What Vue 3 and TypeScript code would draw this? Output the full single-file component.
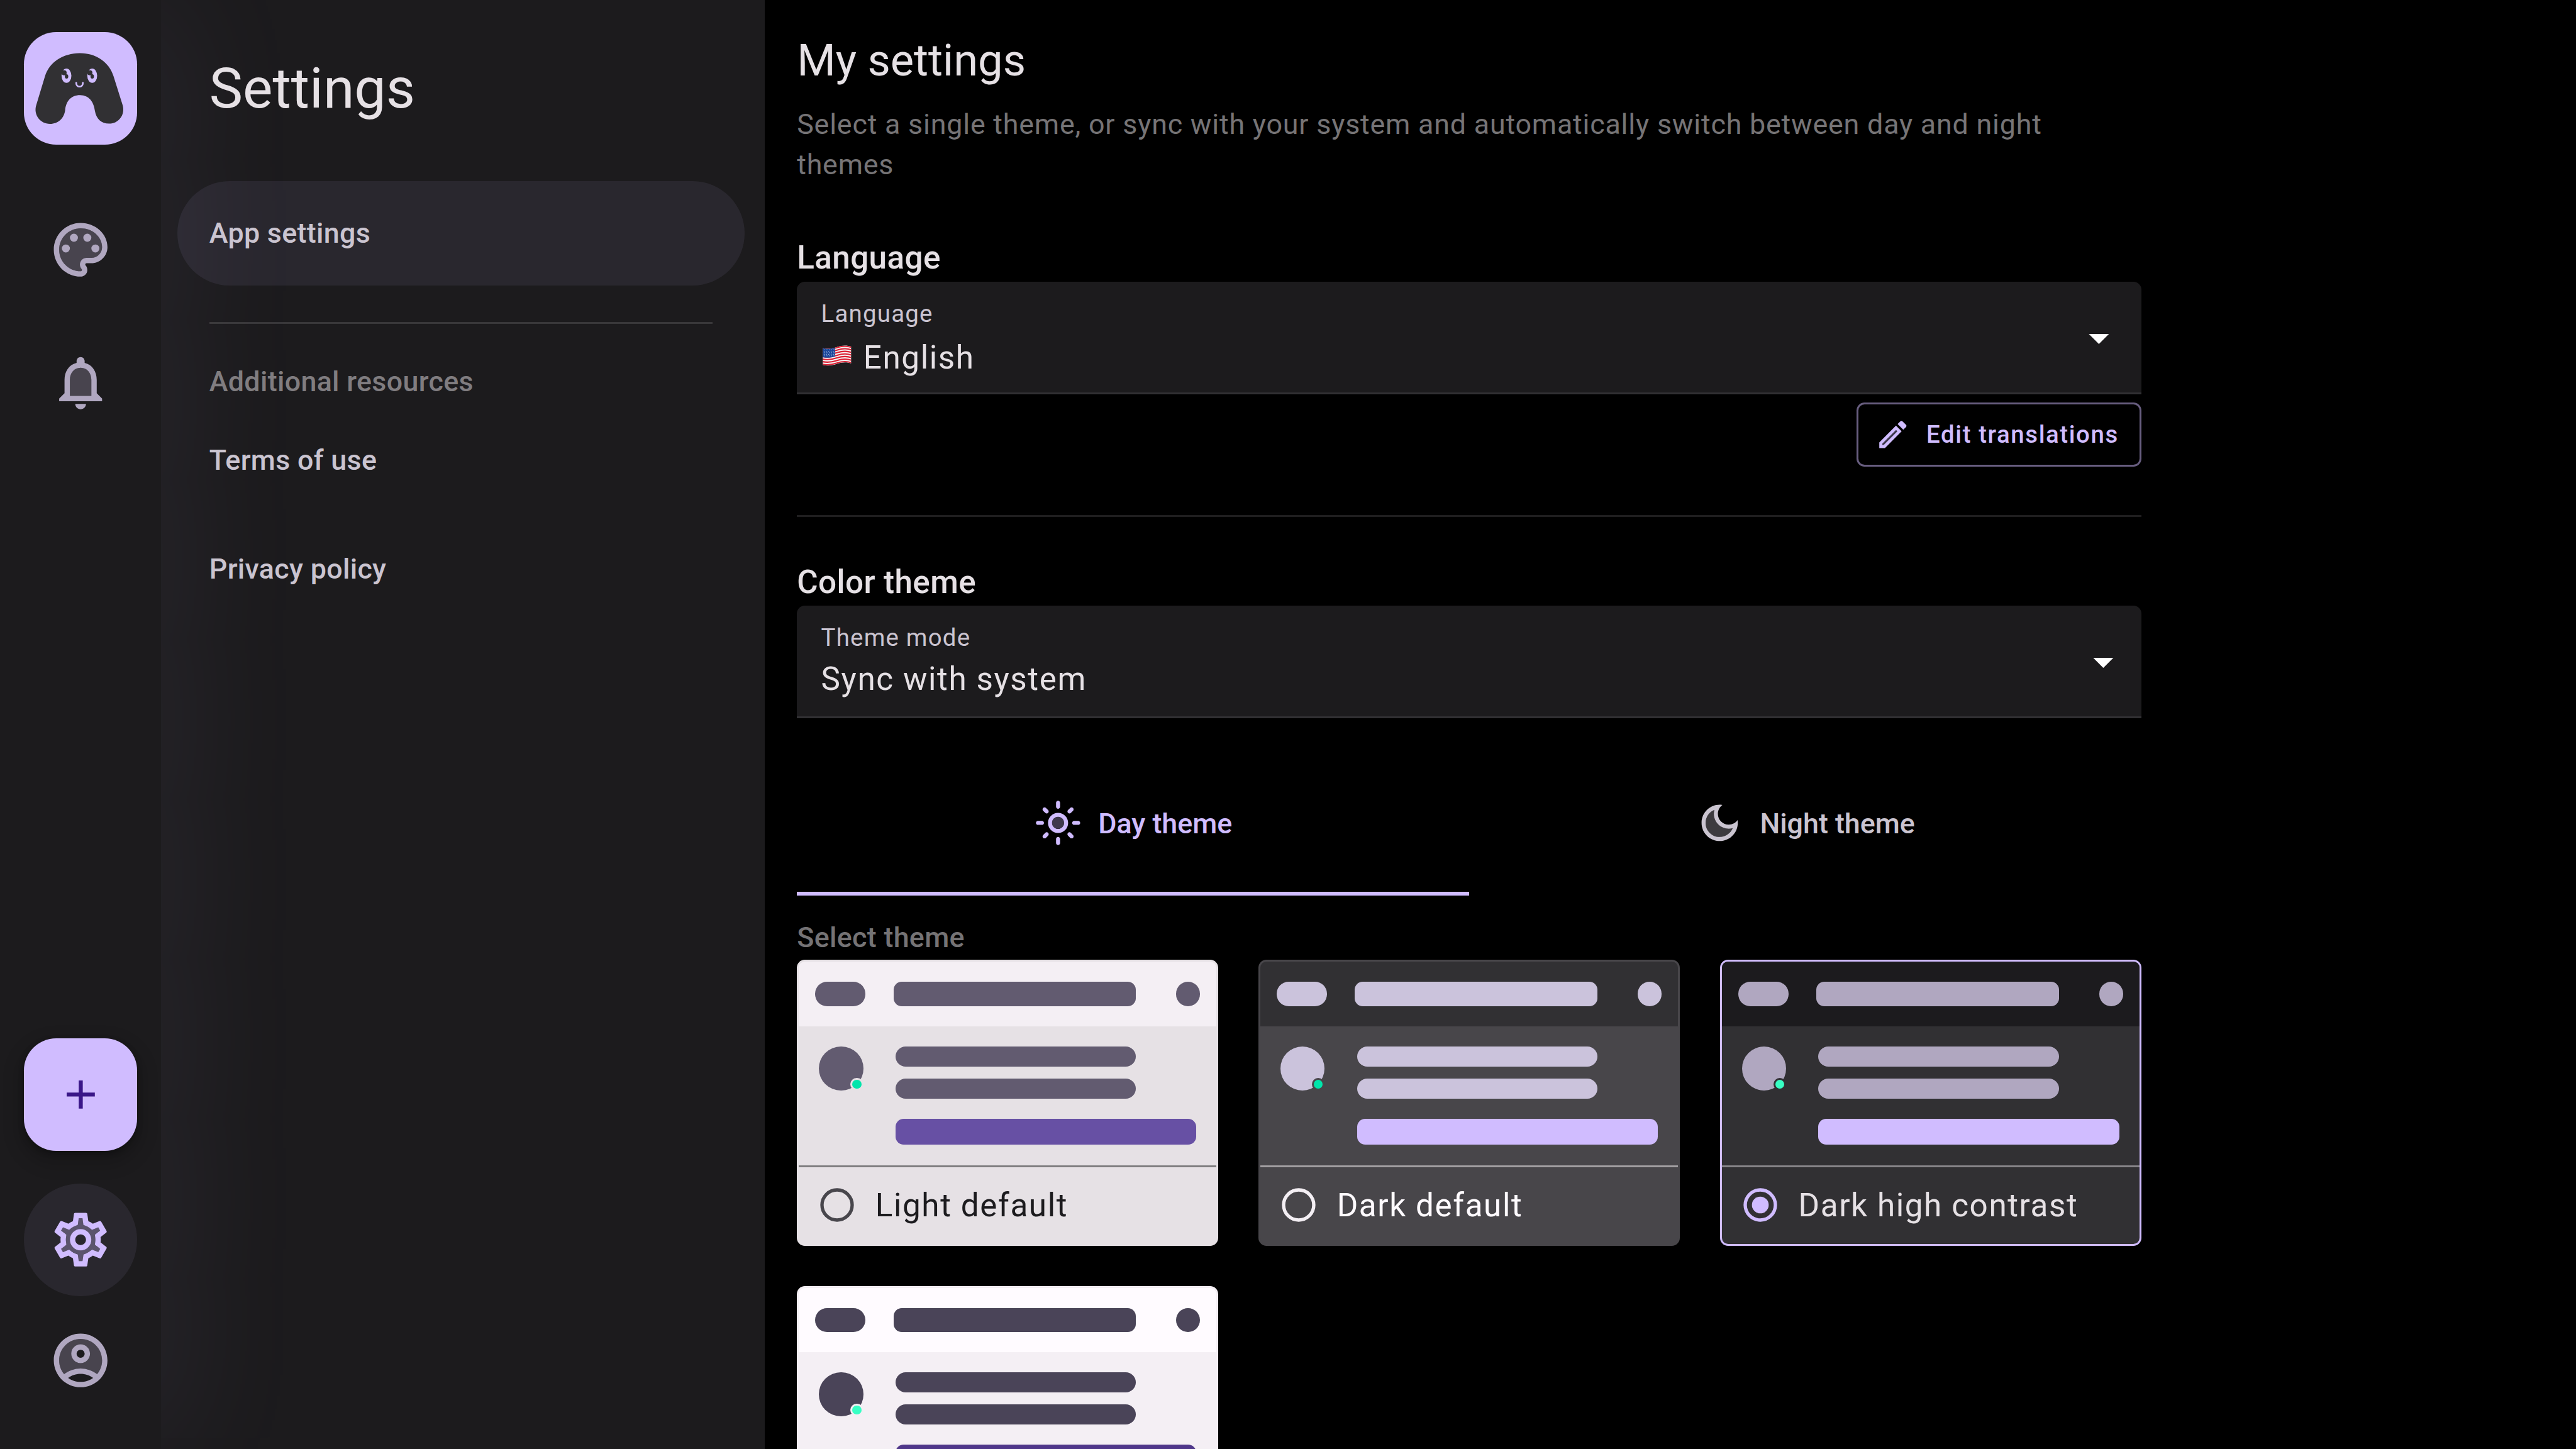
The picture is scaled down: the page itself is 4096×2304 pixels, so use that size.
<script setup lang="ts">
interface ThemeOption {
  id: number
  name?: string
  header: string
  body: string
  chip: string
  primary: string
  status: string
  line: string
  radio: string
  text: string
  selected: boolean
}

interface IconDef {
  tone: string
  main: string
}

const icons: Record<string, IconDef> = {
  palette: {
    tone: 'M12 4c-4.41 0-8 3.59-8 8s3.59 8 8 8c.28 0 .5-.22.5-.5 0-.16-.08-.28-.14-.35-.41-.46-.63-1.05-.63-1.65 0-1.38 1.12-2.5 2.5-2.5H16c2.21 0 4-1.79 4-4 0-3.86-3.59-7-8-7z',
    main: 'M12 2C6.49 2 2 6.49 2 12s4.49 10 10 10c1.38 0 2.5-1.12 2.5-2.5 0-.61-.23-1.21-.64-1.67-.08-.09-.13-.21-.13-.33 0-.28.22-.5.5-.5H16c3.31 0 6-2.69 6-6 0-4.96-4.49-9-10-9zm4 13h-1.77c-1.38 0-2.5 1.12-2.5 2.5 0 .61.22 1.19.63 1.65.06.07.14.19.14.35 0 .28-.22.5-.5.5-4.41 0-8-3.59-8-8s3.59-8 8-8 8 3.14 8 7c0 2.21-1.79 4-4 4zM6.5 10a1.5 1.5 0 1 0 0 3 1.5 1.5 0 0 0 0-3zM9.5 6a1.5 1.5 0 1 0 0 3 1.5 1.5 0 0 0 0-3zM14.5 6a1.5 1.5 0 1 0 0 3 1.5 1.5 0 0 0 0-3zM17.5 10a1.5 1.5 0 1 0 0 3 1.5 1.5 0 0 0 0-3z',
  },
  bell: {
    tone: 'M12 6.5c-2.49 0-4 2.02-4 4.5v6h8v-6c0-2.48-1.51-4.5-4-4.5z',
    main: 'M12 22c1.1 0 2-.9 2-2h-4c0 1.1.89 2 2 2zm6-6v-5c0-3.07-1.63-5.64-4.5-6.32V4c0-.83-.67-1.5-1.5-1.5s-1.5.67-1.5 1.5v.68C7.64 5.36 6 7.92 6 11v5l-2 2v1h16v-1l-2-2zm-2 1H8v-6c0-2.48 1.51-4.5 4-4.5s4 2.02 4 4.5v6z',
  },
  gear: {
    tone: 'M19.28 8.6l-.7-1.21-1.27.51-1.06.43-.91-.7c-.39-.3-.8-.54-1.23-.71l-1.06-.43-.16-1.13L12.7 4h-1.4l-.19 1.35-.16 1.13-1.06.44c-.41.17-.82.41-1.25.73l-.9.68-1.05-.42-1.27-.52-.7 1.21 1.08.84.89.7-.14 1.13c-.03.3-.05.53-.05.73s.02.43.05.73l.14 1.13-.89.7-1.08.84.7 1.21 1.27-.51 1.06-.43.91.7c.39.3.8.54 1.23.71l1.06.43.16 1.13.19 1.36h1.39l.19-1.35.16-1.13 1.06-.43c.41-.17.82-.41 1.25-.73l.9-.68 1.04.42 1.27.51.7-1.21-1.08-.84-.89-.7.14-1.13c.04-.31.05-.52.05-.73 0-.21-.02-.43-.05-.73l-.14-1.13.89-.7 1.1-.84zM12 16c-2.21 0-4-1.79-4-4s1.79-4 4-4 4 1.79 4 4-1.79 4-4 4z',
    main: 'M19.43 12.98c.04-.32.07-.64.07-.98 0-.34-.03-.66-.07-.98l2.11-1.65c.19-.15.24-.42.12-.64l-2-3.46c-.09-.16-.26-.25-.44-.25-.06 0-.12.01-.17.03l-2.49 1c-.52-.4-1.08-.73-1.69-.98l-.38-2.65C14.46 2.18 14.25 2 14 2h-4c-.25 0-.46.18-.49.42l-.38 2.65c-.61.25-1.17.59-1.69.98l-2.49-1c-.06-.02-.12-.03-.18-.03-.17 0-.34.09-.43.25l-2 3.46c-.13.22-.07.49.12.64l2.11 1.65c-.04.32-.07.65-.07.98 0 .33.03.66.07.98l-2.11 1.65c-.19.15-.24.42-.12.64l2 3.46c.09.16.26.25.44.25.06 0 .12-.01.17-.03l2.49-1c.52.4 1.08.73 1.69.98l.38 2.65c.03.24.24.42.49.42h4c.25 0 .46-.18.49-.42l.38-2.65c.61-.25 1.17-.59 1.69-.98l2.49 1c.06.02.12.03.18.03.17 0 .34-.09.43-.25l2-3.46c.12-.22.07-.49-.12-.64l-2.11-1.65zm-1.98-1.71c.04.31.05.52.05.73 0 .21-.02.43-.05.73l-.14 1.13.89.7 1.08.84-.7 1.21-1.27-.51-1.04-.42-.9.68c-.43.32-.84.56-1.25.73l-1.06.43-.16 1.13-.2 1.35h-1.4l-.19-1.35-.16-1.13-1.06-.43c-.43-.18-.83-.41-1.23-.71l-.91-.7-1.06.43-1.27.51-.7-1.21 1.08-.84.89-.7-.14-1.13c-.03-.31-.05-.54-.05-.74s.02-.43.05-.73l.14-1.13-.89-.7-1.08-.84.7-1.21 1.27.51 1.04.42.9-.68c.43-.32.84-.56 1.25-.73l1.06-.43.16-1.13.2-1.35h1.39l.19 1.35.16 1.13 1.06.43c.43.18.83.41 1.23.71l.91.7 1.06-.43 1.27-.51.7 1.21-1.07.85-.89.7.14 1.13zM12 8c-2.21 0-4 1.79-4 4s1.79 4 4 4 4-1.79 4-4-1.79-4-4-4zm0 6c-1.1 0-2-.9-2-2s.9-2 2-2 2 .9 2 2-.9 2-2 2z',
  },
  account: {
    tone: 'M12 4c-4.42 0-8 3.58-8 8 0 1.95.7 3.73 1.86 5.12C7.55 15.8 9.68 15 12 15s4.45.8 6.14 2.12C19.3 15.73 20 13.95 20 12c0-4.42-3.58-8-8-8zm0 9c-1.93 0-3.5-1.57-3.5-3.5S10.07 6 12 6s3.5 1.57 3.5 3.5S13.93 13 12 13z',
    main: 'M12 2C6.48 2 2 6.48 2 12s4.48 10 10 10 10-4.48 10-10S17.52 2 12 2zM7.35 18.5C8.66 17.56 10.26 17 12 17s3.34.56 4.65 1.5c-1.31.94-2.91 1.5-4.65 1.5s-3.34-.56-4.65-1.5zm10.79-1.38C16.45 15.8 14.32 15 12 15s-4.45.8-6.14 2.12C4.7 15.73 4 13.95 4 12c0-4.42 3.58-8 8-8s8 3.58 8 8c0 1.95-.7 3.73-1.86 5.12zM12 6c-1.93 0-3.5 1.57-3.5 3.5S10.07 13 12 13s3.5-1.57 3.5-3.5S13.93 6 12 6zm0 5c-.83 0-1.5-.67-1.5-1.5S11.17 8 12 8s1.5.67 1.5 1.5S12.83 11 12 11z',
  },
  pencil: {
    tone: 'M5 18.08V19h.92l9.06-9.06-.92-.92z',
    main: 'M20.71 7.04c.39-.39.39-1.02 0-1.41l-2.34-2.34c-.2-.2-.45-.29-.71-.29s-.51.1-.7.29l-1.83 1.83 3.75 3.75 1.83-1.83zM3 17.25V21h3.75L17.81 9.94l-3.75-3.75L3 17.25zM5.92 19H5v-.92l9.06-9.06.92.92L5.92 19z',
  },
  sun: {
    tone: 'M12 9a3 3 0 1 0 0 6 3 3 0 0 0 0-6z',
    main: 'M12 9c1.65 0 3 1.35 3 3s-1.35 3-3 3-3-1.35-3-3 1.35-3 3-3m0-2c-2.76 0-5 2.24-5 5s2.24 5 5 5 5-2.24 5-5-2.24-5-5-5zM2 13h2c.55 0 1-.45 1-1s-.45-1-1-1H2c-.55 0-1 .45-1 1s.45 1 1 1zm18 0h2c.55 0 1-.45 1-1s-.45-1-1-1h-2c-.55 0-1 .45-1 1s.45 1 1 1zM11 2v2c0 .55.45 1 1 1s1-.45 1-1V2c0-.55-.45-1-1-1s-1 .45-1 1zm0 18v2c0 .55.45 1 1 1s1-.45 1-1v-2c0-.55-.45-1-1-1s-1 .45-1 1zM5.99 4.58c-.39-.39-1.03-.39-1.41 0-.39.39-.39 1.03 0 1.41l1.06 1.06c.39.39 1.03.39 1.41 0s.39-1.03 0-1.41L5.99 4.58zm12.37 12.37c-.39-.39-1.03-.39-1.41 0-.39.39-.39 1.03 0 1.41l1.06 1.06c.39.39 1.03.39 1.41 0 .39-.39.39-1.03 0-1.41l-1.06-1.06zm1.06-10.96c.39-.39.39-1.03 0-1.41-.39-.39-1.03-.39-1.41 0l-1.06 1.06c-.39.39-.39 1.03 0 1.41s1.03.39 1.41 0l1.06-1.06zM7.05 18.36c.39-.39.39-1.03 0-1.41-.39-.39-1.03-.39-1.41 0l-1.06 1.06c-.39.39-.39 1.03 0 1.41s1.03.39 1.41 0l1.06-1.06z',
  },
  moon: {
    tone: 'M9.37 5.51c-.18.64-.27 1.31-.27 1.99 0 4.08 3.32 7.4 7.4 7.4.68 0 1.35-.09 1.99-.27C17.45 17.19 14.93 19 12 19c-3.86 0-7-3.14-7-7 0-2.93 1.81-5.45 4.37-6.49z',
    main: 'M9.37 5.51c-.18.64-.27 1.31-.27 1.99 0 4.08 3.32 7.4 7.4 7.4.68 0 1.35-.09 1.99-.27C17.45 17.19 14.93 19 12 19c-3.86 0-7-3.14-7-7 0-2.93 1.81-5.45 4.37-6.49M12 3c-4.97 0-9 4.03-9 9s4.03 9 9 9 9-4.03 9-9c0-.46-.04-.92-.1-1.36-.98 1.37-2.58 2.26-4.4 2.26-2.98 0-5.4-2.42-5.4-5.4 0-1.81.89-3.42 2.26-4.4-.44-.06-.9-.1-1.36-.1z',
  },
}

const themes: ThemeOption[] = [
  { id: 1, name: 'Light default', header: '#f4eff4', body: '#e6e1e5', chip: '#625b70', primary: '#6750a4', status: '#00e5ab', line: '#807e80', radio: '#48464c', text: '#1c1b1e', selected: false },
  { id: 2, name: 'Dark default', header: '#313033', body: '#48464a', chip: '#cbc3dc', primary: '#d0bcff', status: '#00e5ab', line: '#a19ea1', radio: '#f4eff4', text: '#fffbff', selected: false },
  { id: 3, name: 'Dark high contrast', header: '#1c1b1e', body: '#313033', chip: '#b0a7c0', primary: '#d0bcff', status: '#38ffc4', line: '#868488', radio: '#d0bcff', text: '#e6e1e5', selected: true },
  { id: 4, header: '#fffbff', body: '#f4eff4', chip: '#4a4458', primary: '#4f378a', status: '#38ffc4', line: '#807e80', radio: '#313033', text: '#000000', selected: false },
]

function cardVars(t: ThemeOption): Record<string, string> {
  return {
    '--header': t.header,
    '--body': t.body,
    '--chip': t.chip,
    '--primary': t.primary,
    '--status': t.status,
    '--line': t.line,
    '--radio': t.radio,
    '--text': t.text,
    '--edge': t.selected ? t.primary : t.body,
  }
}

const stripes = [0, 2, 4, 6, 8, 10, 12]
</script>

<template>
  <div class="app">
    <nav class="rail">
      <div class="logo">
        <svg viewBox="0 0 56 56" width="56" height="56">
          <path fill="#313033" d="M27.8 10.5C36 10.5 42.3 15 44.5 21.8L49.1 36.4C50.4 41 47.2 45.5 42.3 45.5C38.5 45.5 35.9 43 35.3 39.2C34.8 34.8 32.4 31.3 27.9 31.3C23.3 31.3 20.9 34.5 20.5 38.8C20 42.8 17 45.6 13 45.6C8 45.6 4.7 41 6.1 36.4L10.5 21.9C12.6 15.1 19.5 10.5 27.8 10.5Z" />
          <g fill="#d0bcff">
            <ellipse cx="21.15" cy="21.7" rx="2.45" ry="3.55" />
            <ellipse cx="33.95" cy="21.7" rx="2.45" ry="3.55" />
          </g>
          <g fill="#313033">
            <circle cx="20" cy="20.2" r="1.25" />
            <circle cx="32.8" cy="20.2" r="1.25" />
            <ellipse cx="21.2" cy="22" rx=".85" ry="1.1" />
            <ellipse cx="33.95" cy="22" rx=".85" ry="1.1" />
          </g>
          <path fill="none" stroke="#d0bcff" stroke-width=".85" stroke-linecap="round" d="M26 25.2C26 27.75 29.3 27.75 29.3 25.2" />
        </svg>
      </div>
      <div v-for="k in ['palette', 'bell']" :key="k" class="rail-item" :class="k">
        <svg class="i32" viewBox="0 0 24 24"><path :d="icons[k].tone" opacity=".3" /><path :d="icons[k].main" /></svg>
      </div>
      <div class="spacer"></div>
      <div class="add">
        <svg class="i24" viewBox="0 0 24 24"><path d="M19 13h-6v6h-2v-6H5v-2h6V5h2v6h6v2z" /></svg>
      </div>
      <div class="rail-item active">
        <svg class="i32" viewBox="0 0 24 24"><path :d="icons.gear.tone" opacity=".3" /><path :d="icons.gear.main" /></svg>
      </div>
      <div class="rail-item account">
        <svg class="i32" viewBox="0 0 24 24"><path :d="icons.account.tone" opacity=".3" /><path :d="icons.account.main" /></svg>
      </div>
    </nav>

    <aside class="panel">
      <h1>Settings</h1>
      <a class="link current">App settings</a>
      <div class="rule"></div>
      <div class="caption">Additional resources</div>
      <a class="link">Terms of use</a>
      <a class="link">Privacy policy</a>
    </aside>

    <main class="main">
      <div class="content">
        <h2>My settings</h2>
        <p class="desc">Select a single theme, or sync with your system and automatically switch between day and night themes</p>

        <h3>Language</h3>
        <div class="field lang">
          <div class="field-text">
            <div class="label">Language</div>
            <div class="value">
              <svg class="flag" viewBox="0 0 26 19">
                <defs>
                  <clipPath id="wave"><path d="M0 2.6C4.5 3.6 8.500 3 13 1.500C17.500 0 22 -.2 26 1.200V16.400C22 15 17.500 15.300 13 16.800C8.500 18.300 4.500 19 0 17.800Z" /></clipPath>
                </defs>
                <g clip-path="url(#wave)">
                  <rect width="26" height="19" fill="#f5f5f5" />
                  <path v-for="s in stripes" :key="s" fill="none" stroke="#dc1f33" stroke-width="1.2" :transform="`translate(0 ${s * 1.17})`" d="M0 3.200C4.500 4.200 8.500 3.600 13 2.100C17.500 .6 22 .4 26 1.800" />
                  <path fill="#1a479b" d="M0 2.6C4 3.500 7.500 3.200 11.200 2.100V10.300C7.500 11.400 4 11.700 0 10.800Z" />
                  <g fill="#dfe7f5">
                    <template v-for="r in 5" :key="r">
                      <circle v-for="c in 5" :key="c" :cx="c * 2.1 - 0.8 + (r % 2) * 0.5" :cy="2.6 + r * 1.4" r=".32" />
                    </template>
                  </g>
                </g>
              </svg>
              <span>English</span>
            </div>
          </div>
          <svg class="i24 arrow" viewBox="0 0 24 24"><path d="M7 10l5 5 5-5z" /></svg>
        </div>
        <div class="edit-row">
          <button class="edit">
            <svg viewBox="0 0 24 24"><path :d="icons.pencil.tone" opacity=".3" /><path :d="icons.pencil.main" /></svg>
            <span>Edit translations</span>
          </button>
        </div>

        <div class="divider"></div>

        <h3>Color theme</h3>
        <div class="field mode">
          <div class="field-text">
            <div class="label">Theme mode</div>
            <div class="value">Sync with system</div>
          </div>
          <svg class="i24 arrow" viewBox="0 0 24 24"><path d="M7 10l5 5 5-5z" /></svg>
        </div>

        <div class="tabs">
          <div class="tab on">
            <svg class="i24" viewBox="0 0 24 24"><path :d="icons.sun.tone" opacity=".3" /><path :d="icons.sun.main" /></svg>
            <span>Day theme</span>
          </div>
          <div class="tab">
            <svg class="i24" viewBox="0 0 24 24"><path :d="icons.moon.tone" opacity=".3" /><path :d="icons.moon.main" /></svg>
            <span>Night theme</span>
          </div>
        </div>

        <div class="select-label">Select theme</div>
        <div class="cards">
          <div v-for="t in themes" :key="t.id" class="card" :style="cardVars(t)">
            <div class="card-head">
              <i class="pill"></i><i class="bar"></i><i class="dot"></i>
            </div>
            <div class="card-body">
              <div class="avatar"><i class="status"></i></div>
              <div class="lines">
                <i class="text-line"></i>
                <i class="text-line"></i>
                <i class="cta"></i>
              </div>
            </div>
            <div v-if="t.name" class="card-foot">
              <svg viewBox="0 0 24 24">
                <circle cx="12" cy="12" r="9" fill="none" stroke="currentColor" stroke-width="2" />
                <circle v-if="t.selected" cx="12" cy="12" r="5" fill="currentColor" />
              </svg>
              <span>{{ t.name }}</span>
            </div>
          </div>
        </div>
      </div>
    </main>
  </div>
</template>

<style>
html,
body {
  margin: 0;
  background: #000;
  overflow: hidden;
}
</style>

<style scoped>
.app {
  zoom: 3.2;
  display: flex;
  width: 1280px;
  height: 720px;
  overflow: hidden;
  background: #1c1b1d;
  font-family: Roboto, "Liberation Sans", sans-serif;
  color: #e6e1e5;
}
svg {
  display: block;
  flex: none;
  fill: currentColor;
}
h1,
h2,
h3,
p {
  margin: 0;
}
.i24 {
  width: 24px;
  height: 24px;
}
.i32 {
  width: 32px;
  height: 32px;
}

.rail {
  flex: none;
  box-sizing: border-box;
  width: 80px;
  height: 720px;
  padding: 16px 0;
  display: flex;
  flex-direction: column;
  align-items: center;
  background: #1c1b1d;
  color: #b0a7c0;
  box-shadow: 0 0 72px rgba(208, 188, 255, 0.1);
}
.logo,
.add {
  width: 56px;
  height: 56px;
  border-radius: 16px;
  background: #d0bcff;
}
.rail-item,
.add {
  display: flex;
  align-items: center;
  justify-content: center;
}
.rail-item {
  width: 56px;
  height: 56px;
  border-radius: 50%;
}
.palette {
  margin-top: 24px;
}
.bell {
  margin-top: 10px;
}
.spacer {
  flex: 1;
}
.add {
  color: #3a1688;
  box-shadow: 0 4px 8px 3px rgba(0, 0, 0, 0.15), 0 1px 3px rgba(0, 0, 0, 0.3);
}
.active {
  margin-top: 16px;
  background: rgba(208, 188, 255, 0.08);
  color: #d0bcff;
}
.account {
  margin-top: 4px;
}

.panel {
  flex: none;
  box-sizing: border-box;
  width: 300px;
  padding: 26px 10px 0 8px;
}
h1 {
  padding-left: 16px;
  font-size: 28px;
  line-height: 36px;
  font-weight: 400;
}
.link {
  display: flex;
  align-items: center;
  height: 52px;
  margin-bottom: 2px;
  padding-left: 16px;
  border-radius: 26px;
  font-size: 14px;
  line-height: 20px;
  font-weight: 500;
  letter-spacing: 0.1px;
  color: #cac4d0;
}
.link.current {
  margin: 28px 0 18px;
  background: rgba(208, 188, 255, 0.08);
}
.rule {
  height: 1px;
  margin: 0 16px 18.7px;
  background: rgba(255, 255, 255, 0.13);
}
.caption {
  margin-bottom: 3px;
  padding-left: 16px;
  font-size: 14px;
  line-height: 20px;
  font-weight: 500;
  letter-spacing: 0.1px;
  color: #807d80;
}

.main {
  flex: 1;
  height: 720px;
  overflow: hidden;
  background: #000;
}
.content {
  width: 668px;
  padding: 16px 0 0 16px;
}
h2 {
  box-sizing: border-box;
  height: 28px;
  padding-top: 0.3px;
  font-size: 22px;
  line-height: 28px;
  font-weight: 400;
}
.desc {
  margin: 8px 0 24px;
  font-size: 14px;
  line-height: 20px;
  letter-spacing: 0.25px;
  color: #767476;
}
h3 {
  box-sizing: border-box;
  height: 24px;
  padding-top: 0.4px;
  font-size: 16px;
  line-height: 24px;
  font-weight: 500;
  letter-spacing: 0.13px;
}
.field {
  box-sizing: border-box;
  display: flex;
  align-items: center;
  justify-content: space-between;
  height: 56px;
  padding: 0 7px 0 12px;
  border-bottom: 1px solid #313033;
  border-radius: 4px 4px 0 0;
  background: #1c1b1d;
}
.lang {
  padding-right: 9px;
}
.field-text {
  align-self: flex-start;
  padding-top: 7.4px;
}
.arrow {
  color: #fff;
  margin-top: 1px;
}
.label {
  font-size: 12px;
  line-height: 17px;
  letter-spacing: 0.38px;
  color: #cac4d0;
}
.value {
  display: flex;
  align-items: center;
  font-size: 16px;
  line-height: 24px;
  letter-spacing: 0.5px;
  margin-top: 0.4px;
}
.lang .value {
  margin-top: 1.4px;
}
.flag {
  width: 14.3px;
  height: 10.4px;
  margin: -2px 5.9px 0 0.8px;
}
.edit-row {
  display: flex;
  justify-content: flex-end;
  margin: 4px 0 24px;
}
.edit {
  box-sizing: border-box;
  display: flex;
  align-items: center;
  gap: 7.7px;
  height: 32px;
  padding: 0 10.3px 0 8px;
  border: 1px solid rgba(208, 188, 255, 0.5);
  border-radius: 4px;
  background: none;
  color: #d0bcff;
  font: 500 12px/16px Roboto, sans-serif;
  letter-spacing: 0.5px;
}
.edit svg {
  width: 18px;
  height: 18px;
}
.edit span {
  padding-bottom: 0.5px;
}
.divider {
  height: 1px;
  margin-bottom: 20px;
  background: #1f1e1f;
}

.tabs {
  display: flex;
  margin-top: 16px;
}
.tab {
  flex: 1;
  box-sizing: border-box;
  height: 72px;
  display: flex;
  align-items: center;
  justify-content: center;
  gap: 8px;
  padding-top: 2px;
  border-bottom: 2px solid transparent;
  font-size: 14px;
  line-height: 20px;
  font-weight: 500;
  color: #cac4d0;
}
.tab span {
  padding-top: 0.8px;
}
.tab.on {
  color: #d0bcff;
  border-bottom-color: #d0bcff;
}
.select-label {
  margin: 10.9px 0 1.1px;
  font-size: 14px;
  line-height: 20px;
  font-weight: 500;
  letter-spacing: 0.1px;
  color: #757375;
}
.cards {
  display: grid;
  grid-template-columns: repeat(3, 1fr);
  gap: 20px;
}
.card {
  box-sizing: border-box;
  height: 142px;
  border: 1px solid var(--edge);
  border-radius: 4px;
  background: var(--body);
  overflow: hidden;
}
.card i {
  display: block;
  flex: none;
}
.card-head {
  display: flex;
  align-items: center;
  height: 32px;
  padding: 0 8px;
  background: var(--header);
}
.pill {
  width: 25px;
  height: 12px;
  border-radius: 6px;
  background: var(--chip);
}
.card-head .bar {
  flex: 1;
  height: 12px;
  margin: 0 20px 0 14px;
  border-radius: 4px;
  background: var(--chip);
}
.dot {
  width: 12px;
  height: 12px;
  border-radius: 50%;
  background: var(--chip);
}
.card-body {
  box-sizing: border-box;
  display: flex;
  gap: 16px;
  height: 70px;
  padding: 10px;
  border-bottom: 1px solid var(--line);
}
.avatar {
  flex: none;
  position: relative;
  width: 22px;
  height: 22px;
  border-radius: 50%;
  background: var(--chip);
}
.status {
  position: absolute;
  right: 0;
  bottom: 0;
  width: 4.5px;
  height: 4.5px;
  border: 1px solid var(--body);
  border-radius: 50%;
  background: var(--status);
}
.lines {
  flex: 1;
}
.text-line {
  width: 80%;
  height: 10px;
  margin-bottom: 6px;
  border-radius: 5px;
  background: var(--chip);
}
.cta {
  height: 13px;
  margin-top: 10px;
  border-radius: 4px;
  background: var(--primary);
}
.card-foot {
  display: flex;
  align-items: center;
  gap: 9px;
  height: 38px;
  padding-left: 9px;
  font-size: 16px;
  line-height: 24px;
  letter-spacing: 0.5px;
  color: var(--text);
}
.card-foot svg {
  width: 20px;
  height: 20px;
  color: var(--radio);
}
.card-foot span {
  padding-top: 0.8px;
}
</style>
